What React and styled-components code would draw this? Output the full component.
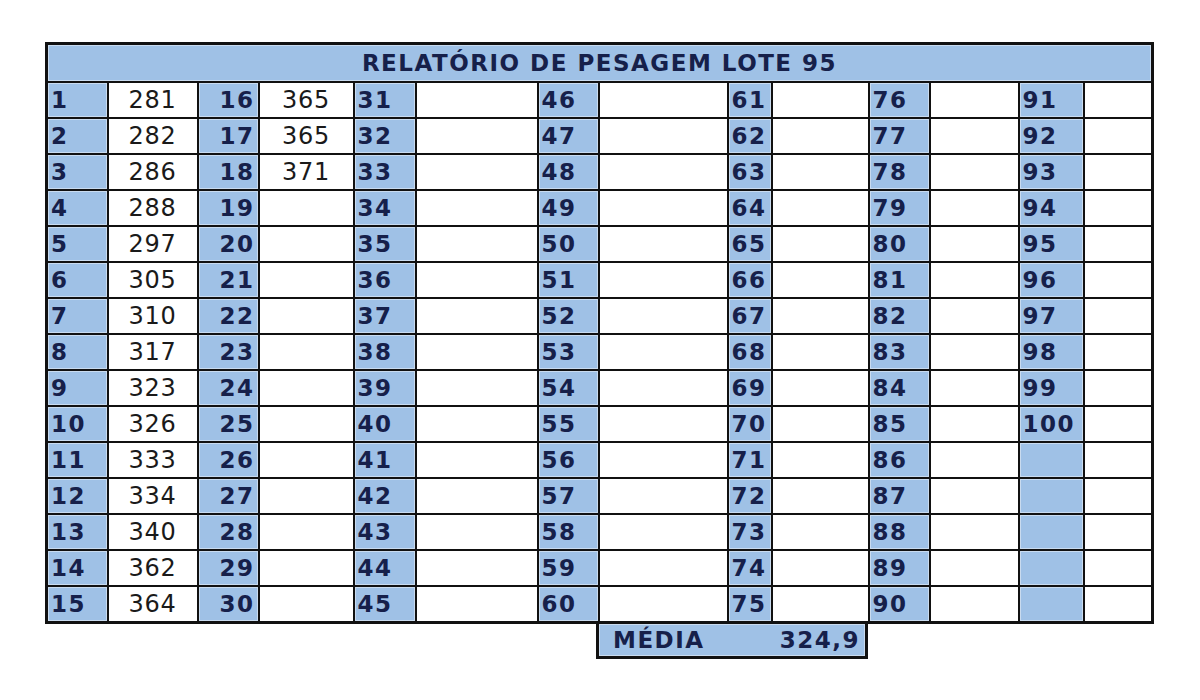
import React from 'react';
import styled, { createGlobalStyle } from 'styled-components';

const GlobalStyle = createGlobalStyle`
  html, body {
    margin: 0;
    padding: 0;
    background: #ffffff;
  }
`;

const BLUE = '#9fc1e6';
const INK = '#16204a';

const firstWeights = [281, 282, 286, 288, 297, 305, 310, 317, 323, 326, 333, 334, 340, 362, 364];
const secondWeights = [365, 365, 371];

const widths = [61, 90, 61, 95, 62, 122, 61, 129, 44, 97, 61, 89, 65, 69];

function App() {
    const rows = [];
    for (let r = 0; r < 15; r++) {
        const cells = [];
        for (let g = 0; g < 7; g++) {
            const num = g * 15 + r + 1;
            let value = '';
            if (g === 0) value = firstWeights[r];
            if (g === 1 && secondWeights[r]) value = secondWeights[r];
            cells.push(
                <NumCell key={'n' + g} $right={g === 1}>{num <= 100 ? num : ''}</NumCell>
            );
            cells.push(<ValueCell key={'v' + g}>{value}</ValueCell>);
        }
        rows.push(<tr key={r}>{cells}</tr>);
    }

    return (
        <Page>
            <GlobalStyle />
            <Sheet>
                <colgroup>
                    {widths.map((w, i) => <col key={i} style={{ width: w }} />)}
                </colgroup>
                <thead>
                    <tr>
                        <Title colSpan={14}>RELATÓRIO DE PESAGEM LOTE 95</Title>
                    </tr>
                </thead>
                <tbody>{rows}</tbody>
            </Sheet>
            <FooterRow>
                <Average>
                    <span>MÉDIA</span>
                    <span>324,9</span>
                </Average>
            </FooterRow>
        </Page>
    );
}

export default App;

const Page = styled.div`
  padding: 42px 0 0 45px;
  font-family: "DejaVu Sans", Verdana, sans-serif;
`;

const Sheet = styled.table`
  border-collapse: collapse;
  table-layout: fixed;
  width: 1107px;
  border: 3px solid #111;
`;

const Title = styled.th`
  height: 36px;
  padding: 0;
  background: ${BLUE};
  box-shadow: inset 0 0 0 1px #c9dbef;
  border: 2px solid #111;
  color: ${INK};
  font-size: 23px;
  font-weight: bold;
  letter-spacing: 1.5px;
  text-align: center;
  vertical-align: middle;
`;

const NumCell = styled.td`
  height: 34px;
  padding: 0 3px;
  background: ${BLUE};
  box-shadow: inset 0 0 0 1px #c9dbef;
  border: 2px solid #111;
  color: ${INK};
  font-size: 23px;
  font-weight: bold;
  letter-spacing: 1.5px;
  text-align: ${props => props.$right ? 'right' : 'left'};
  vertical-align: middle;
  white-space: nowrap;
  overflow: hidden;
`;

const ValueCell = styled.td`
  height: 34px;
  padding: 0;
  background: #ffffff;
  border: 2px solid #111;
  color: #1a1a1a;
  font-size: 24px;
  letter-spacing: 0.7px;
  text-align: center;
  vertical-align: middle;
`;

const FooterRow = styled.div`
  display: flex;
  padding-left: 551px;
`;

const Average = styled.div`
  display: flex;
  justify-content: space-between;
  align-items: center;
  box-sizing: border-box;
  width: 272px;
  height: 38px;
  margin-top: -3px;
  padding: 0 5px 0 14px;
  background: ${BLUE};
  box-shadow: inset 0 0 0 1px #c9dbef;
  border: 3px solid #111;
  color: ${INK};
  font-size: 23px;
  font-weight: bold;
  letter-spacing: 1.5px;
`;
